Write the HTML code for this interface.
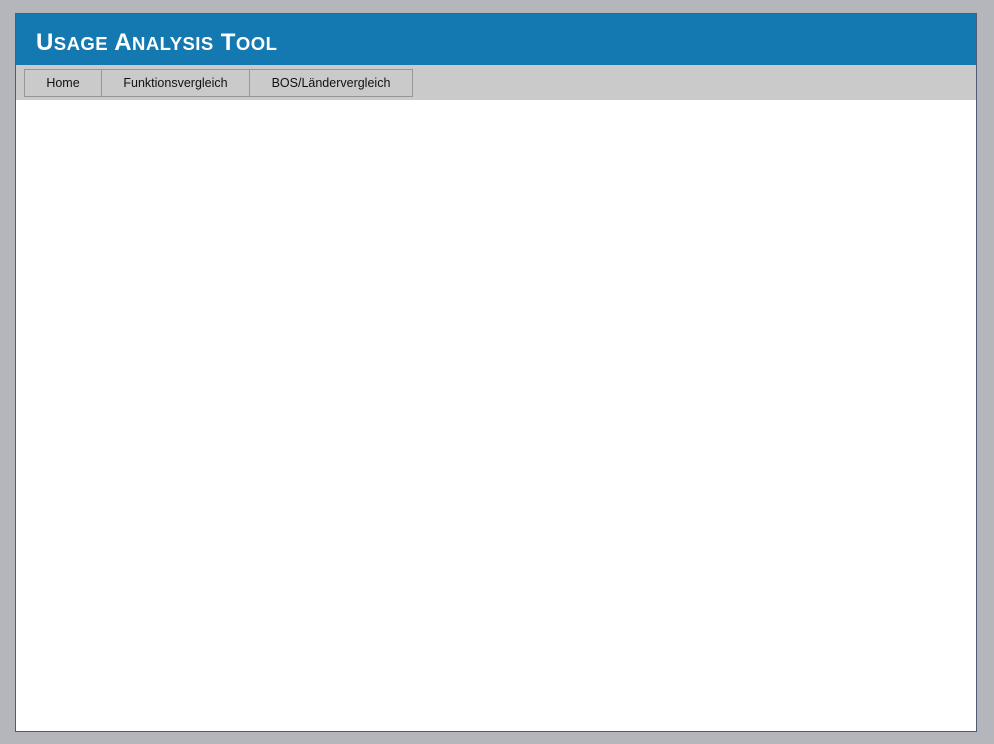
<!DOCTYPE html>
<html><head><meta charset="utf-8"><style>
html,body{margin:0;padding:0;width:994px;height:744px;background:#b5b6bb;overflow:hidden;font-family:"Liberation Sans",sans-serif}
#box{position:absolute;left:15px;top:13px;width:960px;height:717px;border:1px solid #4d5d73;background:#fff}
#hdr{position:absolute;left:0;top:0;width:960px;height:51px;background:#1479b0}
#title{position:absolute;left:20px;top:15px;color:#fff;font-weight:bold;font-size:24px;white-space:nowrap;line-height:28px;letter-spacing:0.45px}
#title span{font-size:18.5px}
#nav{position:absolute;left:0;top:51px;width:960px;height:35px;background:#cacaca}
.b{position:absolute;top:4px;border:1px solid #979797;box-sizing:border-box;height:28px;font-size:12.5px;line-height:26px;text-align:center;color:#111}
</style></head><body>
<div id="box">
<div id="hdr"><div id="title">U<span>SAGE</span> A<span>NALYSIS</span> T<span>OOL</span></div></div>
<div id="nav">
<div class="b" style="left:8px;width:78px">Home</div>
<div class="b" style="left:85px;width:149px">Funktionsvergleich</div>
<div class="b" style="left:233px;width:164px">BOS/Ländervergleich</div>
</div>
</div>
</body></html>
